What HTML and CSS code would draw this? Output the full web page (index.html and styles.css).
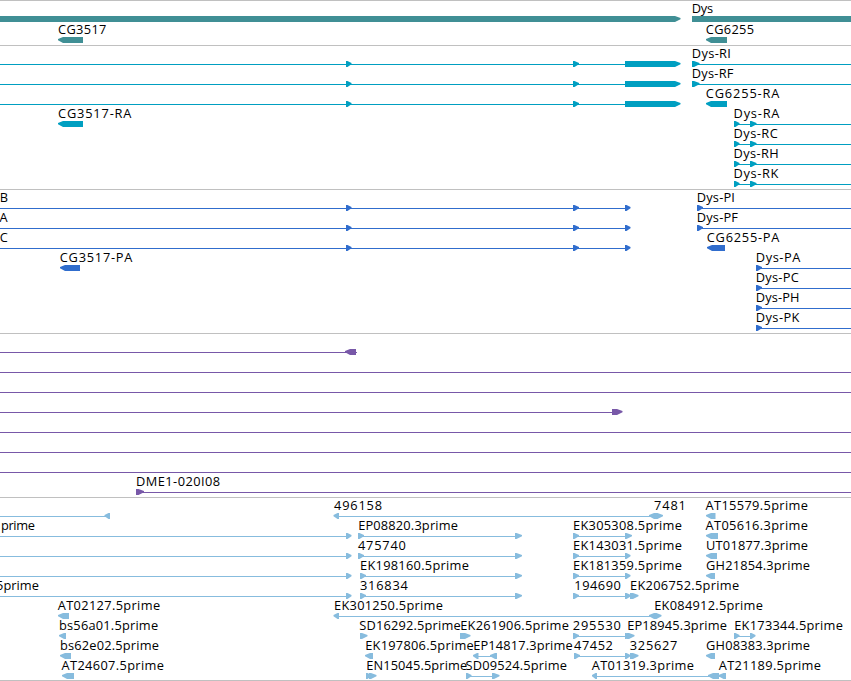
FILE: index.html
```html
<!DOCTYPE html>
<html lang="en">
  <head>
    <meta charset="UTF-8" />
    <meta name="viewport" content="width=device-width, initial-scale=1.0" />
    <title>Dys - genome tracks</title>
    <link rel="stylesheet" href="styles.css">
  </head>

  <body>
    <main class="tracks">
      <section class="track genes" id="genes"></section>
      <section class="track transcripts" id="transcripts"></section>
      <section class="track proteins" id="proteins"></section>
      <section class="track clones" id="clones"></section>
      <section class="track ests" id="ests"></section>
    </main>

    <script src="script.js"></script>
  </body>
</html>
```

FILE: styles.css
```css
body {
  margin: 0;
  background-color: #fff;
  font-family: "Open Sans", "Noto Sans", sans-serif;
}

.tracks {
  display: flex;
  flex-direction: column;
  width: 851px;
  overflow: hidden;
}

.track {
  display: flex;
  flex-direction: column;
  border-top: 1px solid #c0c0c0;
  padding-bottom: 3px;
}

.row {
  display: block;
  width: 851px;
  height: 20px;
  overflow: visible;
}

.row rect {
  shape-rendering: crispEdges;
}

.row text {
  fill: #000;
  font-size: 12.8px;
}

.genes {
  fill: #408f95;
  padding-bottom: 2px;
}

.genes .row {
  height: 21px;
}

.transcripts {
  fill: #009fc1;
}

.proteins {
  fill: #306dcd;
}

.clones {
  fill: #7858a8;
}

.ests {
  fill: #87bcde;
  padding-bottom: 2px;
  border-bottom: 1px solid #c0c0c0;
}
```

FILE: script.js
```js
const SVG = "http://www.w3.org/2000/svg";
const END = 851;

// line: [from, to], fwd / rev: [from, to] of each block, text: [name, from, to]
const exons = [[346, 351.5], [573, 579]];
const dysRow = (name, to) => ({
  line: [[734, END]],
  fwd: [[734, 739.5], [750, 756.5]],
  text: [[name, 734.3, to]],
});
const dysProtein = (name, to) => ({
  line: [[756, END]],
  fwd: [[756, 762]],
  text: [[name, 756.5, to]],
});
const fullLine = { line: [[0, END]] };

const tracks = {
  genes: [
    { line: [], fwd: [[-10, 680.5], [692, 870]], text: [["Dys", 692.5, 712.7]] },
    {
      rev: [[58, 83], [706, 727]],
      text: [["CG3517", 58.7, 106], ["CG6255", 706.5, 753.7]],
    },
  ],

  transcripts: [
    {
      line: [[0, 630], [692, END]],
      fwd: [...exons, [625, 680.5], [692, 699.5]],
      text: [["Dys-RI", 692.5, 730.5]],
    },
    {
      line: [[0, 630], [692, END]],
      fwd: [...exons, [625, 680.5], [692, 699.5]],
      text: [["Dys-RF", 692.5, 733]],
    },
    {
      line: [[0, 630]],
      fwd: [...exons, [625, 680.5]],
      rev: [[706, 727]],
      text: [["CG6255-RA", 706.5, 779]],
    },
    {
      ...dysRow("Dys-RA", 779),
      rev: [[58, 83]],
      text: [["CG3517-RA", 58.7, 131], ["Dys-RA", 734.3, 779]],
    },
    dysRow("Dys-RC", 777.3),
    dysRow("Dys-RH", 778.3),
    dysRow("Dys-RK", 778),
  ],

  proteins: [
    {
      line: [[0, 626], [697, END]],
      fwd: [...exons, [625, 630.5], [697, 703]],
      text: [["B", 0.5, 6.3], ["Dys-PI", 697.5, 734.5]],
    },
    {
      line: [[0, 626], [697, END]],
      fwd: [...exons, [625, 630.5], [697, 703]],
      text: [["A", 0.2, 8.7], ["Dys-PF", 697.5, 737.5]],
    },
    {
      line: [[0, 626]],
      fwd: [...exons, [625, 630.5]],
      rev: [[707, 725]],
      text: [["C", 0.5, 7.2], ["CG6255-PA", 707.5, 779]],
    },
    {
      ...dysProtein("Dys-PA", 800),
      rev: [[60, 80]],
      text: [["CG3517-PA", 60.5, 132], ["Dys-PA", 756.5, 800]],
    },
    dysProtein("Dys-PC", 798.3),
    dysProtein("Dys-PH", 799),
    dysProtein("Dys-PK", 799),
  ],

  clones: [
    { line: [[0, 357]], rev: [[345, 356]] },
    fullLine,
    fullLine,
    { line: [[0, 613]], fwd: [[612, 622.5]] },
    fullLine,
    fullLine,
    fullLine,
    {
      line: [[136, END]],
      fwd: [[136, 144]],
      text: [["DME1-020I08", 136.7, 219.7]],
    },
  ],

  ests: [
    {
      line: [[0, 107], [337, 654]],
      fwd: [[656, 663]],
      rev: [[104.5, 110], [333.5, 339], [649, 657], [706, 715.5]],
      text: [
        ["496158", 334.7, 381.7],
        ["7481", 654.7, 685.5],
        ["AT15579.5prime", 706.3, 807.5],
      ],
    },
    {
      line: [[0, 347], [358, 518], [573, 628]],
      fwd: [[346, 351.5], [358, 364], [515, 522], [573, 579], [625, 632]],
      rev: [[706, 718]],
      text: [
        ["prime", 1.6, 34.5],
        ["EP08820.3prime", 358.9, 457.5],
        ["EK305308.5prime", 573.7, 681.5],
        ["AT05616.3prime", 706.3, 807.5],
      ],
    },
    {
      line: [[0, 347], [358, 518], [573, 628]],
      fwd: [[346, 351.5], [358, 364], [515, 522], [573, 579], [625, 630.5]],
      rev: [[706, 717]],
      text: [
        ["475740", 358.7, 405.5],
        ["EK143031.5prime", 573.7, 681.5],
        ["UT01877.3prime", 706.7, 807.5],
      ],
    },
    {
      line: [[0, 347], [360, 518], [573, 628]],
      fwd: [[346, 351.5], [360, 366], [515, 522], [573, 579], [625, 630.5]],
      rev: [[706, 715]],
      text: [
        ["EK198160.5prime", 360.7, 468.5],
        ["EK181359.5prime", 573.7, 681.5],
        ["GH21854.3prime", 706.7, 809.5],
      ],
    },
    {
      line: [[0, 347], [360, 518], [573, 628]],
      fwd: [[346, 351.5], [360, 366], [515, 522], [573, 579], [625, 631], [630, 638.5]],
      text: [
        ["5prime", -3.2, 38.5],
        ["316834", 360.7, 407.5],
        ["194690", 575, 620.5],
        ["EK206752.5prime", 630.7, 738.7],
      ],
    },
    {
      line: [[337, 654]],
      fwd: [[655, 661.5]],
      rev: [[58, 69], [333.5, 339], [649, 656]],
      text: [
        ["AT02127.5prime", 58.4, 159.7],
        ["EK301250.5prime", 334.7, 442.5],
        ["EK084912.5prime", 654.9, 762.5],
      ],
    },
    {
      line: [[573, 627], [734, 752]],
      fwd: [[360, 367.5], [460, 470.5], [573, 579], [625, 630.5], [627, 634.5], [734, 739.5], [750, 755.5]],
      rev: [[59, 66]],
      text: [
        ["bs56a01.5prime", 59.7, 157.7],
        ["SD16292.5prime", 359.9, 460.3],
        ["EK261906.5prime", 460.9, 568.5],
        ["295530", 573.5, 620.5],
        ["EP18945.3prime", 627.9, 726.5],
        ["EK173344.5prime", 734.9, 842.5],
      ],
    },
    {
      line: [[476, 494], [574, 628]],
      fwd: [[574, 580], [625, 630.5], [630, 638.5]],
      rev: [[60, 71], [365, 373], [473, 478.5], [490, 497], [706, 715]],
      text: [
        ["bs62e02.5prime", 60.7, 158.5],
        ["EK197806.5prime", 365.9, 473.3],
        ["EP14817.3prime", 473.9, 572.2],
        ["47452", 574.7, 612.5],
        ["325627", 630.5, 677],
        ["GH08383.3prime", 706.7, 809.5],
      ],
    },
    {
      line: [[466, 495], [595, 722]],
      fwd: [[366, 371.5], [369, 376.5], [466, 471.5], [492, 499.5]],
      rev: [[62, 74], [592, 597], [708, 719], [718.5, 726]],
      text: [
        ["AT24607.5prime", 62.3, 163.5],
        ["EN15045.5prime", 366.9, 466.8],
        ["SD09524.5prime", 466.3, 566.5],
        ["AT01319.3prime", 592.5, 693.5],
        ["AT21189.5prime", 719.5, 820.5],
      ],
    },
  ],
};

function add(parent, name, attrs) {
  const el = document.createElementNS(SVG, name);
  for (const key in attrs) {
    el.setAttribute(key, attrs[key]);
  }
  parent.appendChild(el);
  return el;
}

function drawRow(track, row) {
  const svg = add(track, "svg", { class: "row" });

  (row.line || []).forEach(([from, to]) => {
    add(svg, "rect", { x: from, y: 18, width: to - from, height: 1 });
  });

  (row.fwd || []).forEach(([from, to]) => {
    const neck = Math.max(from + 1.5, to - 5.5);
    add(svg, "polygon", {
      points: `${from},15 ${neck},15 ${to},17 ${to},18.3 ${neck},21 ${from},21`,
    });
  });

  (row.rev || []).forEach(([from, to]) => {
    const neck = Math.min(to - 1.5, from + 5);
    add(svg, "polygon", {
      points: `${to},15 ${neck},15 ${from},17 ${from},18.3 ${neck},21 ${to},21`,
    });
  });

  (row.text || []).forEach(([name, from, to]) => {
    const label = add(svg, "text", { x: from - 0.7, y: 12 });
    if (name.length > 1) {
      label.setAttribute("textLength", to - from + 1.1);
    }
    label.textContent = name;
  });
}

for (const id in tracks) {
  const track = document.getElementById(id);
  tracks[id].forEach((row) => drawRow(track, row));
}
```
